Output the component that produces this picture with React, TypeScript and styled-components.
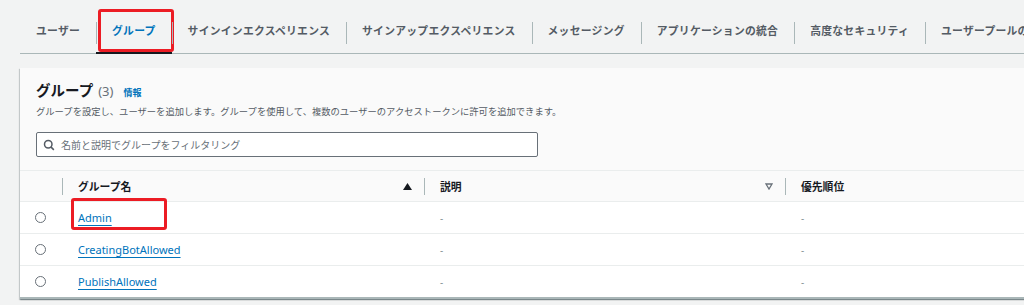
import styled, { createGlobalStyle } from "styled-components";

const GlobalStyle = createGlobalStyle`
  html, body {
    margin: 0;
    padding: 0;
    background: #f2f3f3;
    overflow: hidden;
  }
  body {
    font-family: "Noto Sans", "Noto Sans CJK JP", sans-serif;
    color: #16191f;
  }
`;

const Page = styled.div`
  width: 1024px;
  height: 305px;
  overflow: hidden;
`;

const TabBar = styled.div`
  display: flex;
  margin-left: 20px;
  height: 54px;
  border-bottom: 1px solid #aab7b8;
  box-sizing: border-box;
  white-space: nowrap;
`;

const Tab = styled.div<{ active?: boolean; first?: boolean }>`
  position: relative;
  display: flex;
  align-items: center;
  height: 54px;
  padding: 10px 16px 0 16px;
  box-sizing: border-box;
  font-size: 10.8px;
  font-weight: 700;
  letter-spacing: 0.26px;
  line-height: 16px;
  color: ${(p) => (p.active ? "#0073bb" : "#545b64")};
  border-bottom: 2px solid ${(p) => (p.active ? "#16191f" : "transparent")};
  margin-bottom: -1px;

  &::before {
    content: "";
    display: ${(p) => (p.first ? "none" : "block")};
    position: absolute;
    left: 0;
    top: 22px;
    height: 22px;
    border-left: 1px solid #aab7b8;
  }
`;

const Marker = styled.div`
  position: absolute;
  border: 3px solid #ec1c24;
  border-radius: 3px;
  box-sizing: border-box;
  pointer-events: none;
`;

const TabMarker = styled(Marker)`
  left: 2px;
  top: 9px;
  right: -2px;
  height: 43px;
`;

const LinkMarker = styled(Marker)`
  left: 9px;
  top: -4px;
  width: 96px;
  height: 32px;
`;

const Panel = styled.div`
  margin: 14px -20px 0 20px;
  background: #fff;
  box-shadow: 0 1px 1px 0 rgba(0, 28, 36, 0.3), 1px 1px 1px 0 rgba(0, 28, 36, 0.15),
    -1px 1px 1px 0 rgba(0, 28, 36, 0.15);
  border-bottom: 2px solid #aab7b8;
`;

const PanelHeader = styled.div`
  background: #fafafa;
  padding: 11px 16px 13px;
  border-bottom: 1px solid #eaeded;
`;

const TitleRow = styled.div`
  display: flex;
  align-items: baseline;
  gap: 5px;
  height: 22px;
`;

const Title = styled.h2`
  margin: 0;
  font-size: 14.5px;
  font-weight: 700;
  line-height: 22px;
`;

const Count = styled.span`
  font-size: 13px;
  color: #687078;
  font-weight: 400;
`;

const Info = styled.a`
  font-size: 9px;
  font-weight: 700;
  color: #0073bb;
  margin-left: 5px;
`;

const Description = styled.p`
  margin: 4px 0 0;
  font-size: 9.3px;
  line-height: 14px;
  color: #545b64;
`;

const Search = styled.div`
  margin-top: 13px;
  width: 502px;
  height: 25px;
  box-sizing: border-box;
  border: 1px solid #687078;
  border-radius: 2px;
  background: #fff;
  display: flex;
  align-items: center;
  gap: 6px;
  padding-left: 6px;
`;

const Placeholder = styled.span`
  font-size: 10px;
  color: #687078;
  line-height: 14px;
`;

const Table = styled.div`
  display: grid;
  grid-template-columns: 42px 362px 361px 1fr;
`;

const HeadCell = styled.div<{ divider?: boolean }>`
  position: relative;
  height: 30px;
  background: #fafafa;
  border-bottom: 1px solid #eaeded;
  display: flex;
  align-items: center;
  justify-content: space-between;
  padding: 0 12px 0 16px;
  font-size: 10.8px;
  font-weight: 700;
  color: #16191f;

  &::before {
    content: "";
    display: ${(p) => (p.divider ? "block" : "none")};
    position: absolute;
    left: 0;
    top: 7px;
    height: 17px;
    border-left: 1px solid #aab7b8;
  }
`;

const SortIcon = styled.svg`
  flex: none;
`;

const Cell = styled.div<{ last?: boolean }>`
  position: relative;
  height: 31px;
  background: #fff;
  border-bottom: ${(p) => (p.last ? "none" : "1px solid #eaeded")};
  display: flex;
  align-items: center;
  padding-left: 16px;
  font-size: 11px;
`;

const RadioCell = styled(Cell)`
  padding-left: 15px;
`;

const Radio = styled.span`
  width: 11px;
  height: 11px;
  box-sizing: border-box;
  border: 1px solid #687078;
  border-radius: 50%;
  background: #fff;
`;

const GroupLink = styled.a`
  color: #0073bb;
  text-decoration: underline;
  text-underline-offset: 3px;
  font-size: 11px;
`;

const Dash = styled.span`
  color: #879596;
  font-size: 10px;
`;

const tabs = [
  "ユーザー",
  "グループ",
  "サインインエクスペリエンス",
  "サインアップエクスペリエンス",
  "メッセージング",
  "アプリケーションの統合",
  "高度なセキュリティ",
  "ユーザープールのプロパティ",
];

const groups = ["Admin", "CreatingBotAllowed", "PublishAllowed"];

const App = () => {
  return (
    <Page>
      <GlobalStyle />
      <TabBar>
        {tabs.map((t, i) => (
          <Tab key={t} first={i === 0} active={i === 1}>
            {t}
            {i === 1 && <TabMarker />}
          </Tab>
        ))}
      </TabBar>
      <Panel>
        <PanelHeader>
          <TitleRow>
            <Title>グループ</Title>
            <Count>(3)</Count>
            <Info>情報</Info>
          </TitleRow>
          <Description>
            グループを設定し、ユーザーを追加します。グループを使用して、複数のユーザーのアクセストークンに許可を追加できます。
          </Description>
          <Search>
            <svg width="12" height="12" viewBox="0 0 16 16">
              <circle cx="7" cy="7" r="5" fill="none" stroke="#545b64" strokeWidth="2" />
              <line x1="10.5" y1="10.5" x2="14.5" y2="14.5" stroke="#545b64" strokeWidth="2" />
            </svg>
            <Placeholder>名前と説明でグループをフィルタリング</Placeholder>
          </Search>
        </PanelHeader>
        <Table>
          <HeadCell />
          <HeadCell divider>
            グループ名
            <SortIcon width="9" height="7" viewBox="0 0 9 7">
              <polygon points="4.5,0 9,7 0,7" fill="#16191f" />
            </SortIcon>
          </HeadCell>
          <HeadCell divider>
            説明
            <SortIcon width="8" height="7" viewBox="0 0 8 7">
              <polygon points="1,1 7,1 4,6" fill="none" stroke="#687078" strokeWidth="1.3" />
            </SortIcon>
          </HeadCell>
          <HeadCell divider>優先順位</HeadCell>
          {groups.map((g, i) => {
            const last = i === groups.length - 1;
            return [
              <RadioCell key={g + "r"} last={last}>
                <Radio />
              </RadioCell>,
              <Cell key={g + "n"} last={last}>
                <GroupLink>{g}</GroupLink>
                {i === 0 && <LinkMarker />}
              </Cell>,
              <Cell key={g + "d"} last={last}>
                <Dash>-</Dash>
              </Cell>,
              <Cell key={g + "p"} last={last}>
                <Dash>-</Dash>
              </Cell>,
            ];
          })}
        </Table>
      </Panel>
    </Page>
  );
};

export default App;
